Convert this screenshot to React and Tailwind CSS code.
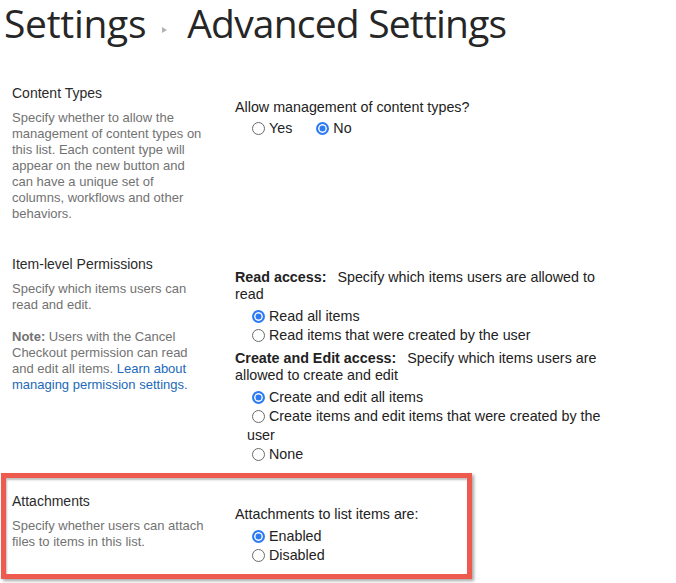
import React from "react";

const body = { fontFamily: '"Liberation Sans", Arial, sans-serif' };

function Radio({ checked }) {
  return checked ? (
    <span className="inline-block w-[13px] h-[13px] rounded-full border-[2px] border-[#2d7bf4] bg-[#2d7bf4] shadow-[inset_0_0_0_1.5px_#ffffff] ml-[5px] mr-[4px] align-[-2px]" />
  ) : (
    <span className="inline-block w-[13px] h-[13px] rounded-full border border-[#6a6a6a] bg-white ml-[5px] mr-[4px] align-[-2px]" />
  );
}

function Option({ checked, children }) {
  return (
    <div className="pl-[12px] leading-[19px]">
      <Radio checked={checked} />
      {children}
    </div>
  );
}

function Section({ title, desc, children, className = "", leftPad = "pl-[12px]", leftW = "w-[235px]" }) {
  return (
    <div className={"flex items-start " + className}>
      <div className={leftW + " shrink-0 " + leftPad}>
        <div className="w-[194px] text-[14px] text-[#2b2b2b] leading-[18px]">{title}</div>
        <div className="w-[194px] mt-[8px] text-[13px] text-[#727272] leading-[16px]">{desc}</div>
      </div>
      <div className="w-[372px] shrink-0 text-[14.3px] text-[#222] leading-[18px]">{children}</div>
    </div>
  );
}

export default function App() {
  return (
    <div className="w-[676px] h-[583px] bg-white overflow-hidden" style={body}>
      <div
        className="flex items-start pl-[4px] h-[44px] text-[#262626] text-[39px] leading-[46px] whitespace-nowrap"
        style={{ fontFamily: '"Open Sans", "Noto Sans", sans-serif' }}
      >
        <span className="tracking-[-0.3px]">Settings</span>
        <span className="ml-[16px] mr-[20px] mt-[27px] inline-block w-0 h-0 border-y-[3px] border-y-transparent border-l-[5px] border-l-[#b3b3b3]" />
        <span className="tracking-[-0.8px]">Advanced Settings</span>
      </div>

      <Section
        className="mt-[40px]"
        title="Content Types"
        desc="Specify whether to allow the management of content types on this list. Each content type will appear on the new button and can have a unique set of columns, workflows and other behaviors."
      >
        <div className="pt-[14px]">Allow management of content types?</div>
        <div className="mt-[3px] pl-[12px]">
          <span className="mr-[19px]">
            <Radio checked={false} />Yes
          </span>
          <span>
            <Radio checked />No
          </span>
        </div>
      </Section>

      <Section
        className="mt-[33px]"
        title="Item-level Permissions"
        desc={
          <>
            <p>Specify which items users can read and edit.</p>
            <p className="mt-[16px]">
              <b className="font-bold">Note:</b> Users with the Cancel Checkout permission can read and edit all items.{" "}
              <span className="text-[#2169b8]">Learn about managing permission settings.</span>
            </p>
          </>
        }
      >
        <div className="pt-[14px] leading-[17px]">
          <b className="font-bold">Read access:</b>
          <span className="ml-[11px]">Specify which items users are allowed to read</span>
        </div>
        <div className="mt-[4px]">
          <Option checked>Read all items</Option>
          <Option checked={false}>Read items that were created by the user</Option>
        </div>
        <div className="mt-[5px] leading-[17px]">
          <b className="font-bold">Create and Edit access:</b>
          <span className="ml-[11px]">Specify which items users are allowed to create and edit</span>
        </div>
        <div className="mt-[4px]">
          <Option checked>Create and edit all items</Option>
          <Option checked={false}>Create items and edit items that were created by the user</Option>
          <Option checked={false}>None</Option>
        </div>
      </Section>

      <div className="mt-[9px] ml-[1px] w-[471px] h-[106px] border-[5px] border-[#ee5a4e] shadow-[2px_2px_3px_rgba(0,0,0,0.35),inset_1px_2px_2px_rgba(0,0,0,0.25)] pt-[14px]">
        <Section
          leftPad="pl-[6px]"
          leftW="w-[229px]"
          title="Attachments"
          desc="Specify whether users can attach files to items in this list."
        >
          <div className="pt-[13px]">Attachments to list items are:</div>
          <div className="mt-[4px]">
            <Option checked>Enabled</Option>
            <Option checked={false}>Disabled</Option>
          </div>
        </Section>
      </div>
    </div>
  );
}
